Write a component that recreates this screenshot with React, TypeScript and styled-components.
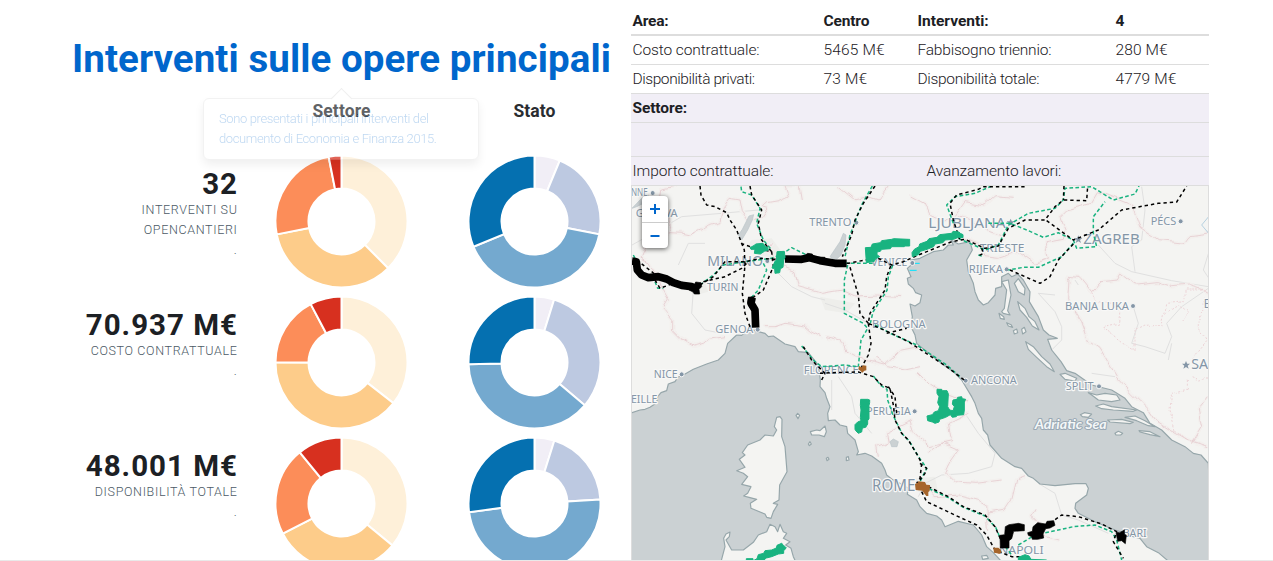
import React from "react";
import styled, { createGlobalStyle } from "styled-components";

const Global = createGlobalStyle`
  * { box-sizing: border-box; }
  body { margin: 0; background: #fff; overflow: hidden; font-family: Roboto, "Liberation Sans", sans-serif; color: #1c2024; }
`;

const Page = styled.main`
  display: flex;
  height: 561px;
  padding-left: 72px;
  overflow: hidden;
  border-bottom: 1px solid #e9e9e9;
`;

const Summary = styled.section`
  width: 559px;
  flex: none;
  position: relative;
`;

const Title = styled.h1`
  margin: 0;
  width: 559px;
  padding-top: 37px;
  height: 90px;
  line-height: 44px;
  font-size: 38.5px;
  font-weight: 700;
  letter-spacing: 0.08px;
  color: #06c;
  white-space: nowrap;
`;

const Grid = styled.div`
  display: grid;
  grid-template-columns: 173px 193px 193px;
  grid-template-rows: 61px;
  grid-auto-rows: 141px;
`;

const ColumnTitle = styled.h2`
  margin: 0;
  padding-top: 10px;
  text-align: center;
  font-size: 17.5px;
  line-height: 22px;
  font-weight: 700;
  letter-spacing: 0.1px;
  color: #2a2d31;
`;

const Stat = styled.div`
  padding: 17px 8px 0 0;
  text-align: right;
`;

const Value = styled.div`
  font-size: 29.5px;
  line-height: 32px;
  font-weight: 700;
  letter-spacing: 1px;
  margin-right: -1px;
  white-space: nowrap;
`;

const Caption = styled.div`
  font-size: 12.5px;
  line-height: 20px;
  font-weight: 300;
  letter-spacing: 0.65px;
  margin-right: -0.5px;
  color: #4c5a66;
  text-transform: uppercase;
`;

const DonutSvg = styled.svg`
  display: block;
  margin: 4px 0 0 30px;
`;

const Tooltip = styled.div`
  position: absolute;
  left: 131px;
  top: 98px;
  width: 276px;
  height: 62px;
  padding: 10px 15px;
  opacity: 0.25;
  border: 1px solid #ccc;
  border-radius: 6px;
  background: #fff;
  box-shadow: 0 5px 10px rgba(0, 0, 0, 0.25);
  font-size: 13px;
  line-height: 20px;
  font-weight: 300;
  letter-spacing: -0.38px;
  color: #06c;
  white-space: nowrap;
  &::before {
    content: "";
    position: absolute;
    left: 130px;
    top: -8px;
    width: 14px;
    height: 14px;
    border: 1px solid #bbb;
    border-right: 0;
    border-bottom: 0;
    background: #fff;
    transform: rotate(45deg);
  }
`;

const Detail = styled.section`
  width: 578px;
  flex: none;
  padding-top: 7px;
  display: flex;
  flex-direction: column;
`;

const Row = styled.div<{ $cols?: string; $h?: number; $head?: boolean; $shade?: boolean; $rule?: number }>`
  display: grid;
  grid-template-columns: ${(p) => p.$cols || "191px 94px 198px 1fr"};
  height: ${(p) => p.$h || 29}px;
  padding-left: 1.5px;
  line-height: 28px;
  font-size: 15.5px;
  font-weight: ${(p) => (p.$head ? 700 : 300)};
  background: ${(p) => (p.$shade ? "#f1eef6" : "#fff")};
  border-top: ${(p) => p.$rule ?? 1}px solid #ddd;
  white-space: nowrap;
`;

const Cell = styled.span<{ $track?: number }>`
  letter-spacing: ${(p) => p.$track ?? -0.2}px;
`;

const MapFrame = styled.div`
  position: relative;
  height: 375px;
  border: 1px solid #ddd;
  border-bottom: 0;
  overflow: hidden;
`;

const MapSvg = styled.svg`
  display: block;
`;

const Zoom = styled.div`
  position: absolute;
  left: 10px;
  top: 10px;
  width: 26px;
  border-radius: 4px;
  background: #fff;
  box-shadow: 0 1px 5px rgba(0, 0, 0, 0.65);
`;

const ZoomButton = styled.button`
  display: flex;
  align-items: center;
  justify-content: center;
  width: 26px;
  height: 26px;
  padding: 0;
  border: 0;
  background: none;
  color: #06c;
  & + & { border-top: 1px solid #ccc; }
`;

const point = (r: number, deg: number) => {
  const a = (deg * Math.PI) / 180;
  return `${(66 + r * Math.sin(a)).toFixed(2)} ${(66 - r * Math.cos(a)).toFixed(2)}`;
};

const slice = (from: number, to: number) => {
  const large = to - from > 180 ? 1 : 0;
  return `M${point(66, from)}A66 66 0 ${large} 1 ${point(66, to)}L${point(33, to)}A33 33 0 ${large} 0 ${point(33, from)}Z`;
};

const SECTOR = ["#fef0d9", "#fdcc8a", "#fc8d59", "#d7301f"];
const STATE = ["#f1eef6", "#bdc9e1", "#74a9cf", "#0570b0"];

function Donut({ stops, colors }: { stops: number[]; colors: string[] }) {
  const edges = [0, ...stops, 360];
  return (
    <DonutSvg width="133" height="133" viewBox="-0.5 -0.5 133 133">
      {colors.map((c, i) => (
        <path key={c} d={slice(edges[i], edges[i + 1])} fill={c} stroke="#fff" strokeWidth="2" />
      ))}
    </DonutSvg>
  );
}

const STATS = [
  { value: "32", caption: ["Interventi su", "opencantieri", "."], sector: [135, 258.75, 348.75], state: [22.5, 101.25, 247.5] },
  { value: "70.937 M€", caption: ["Costo contrattuale", "."], sector: [128.1, 270.2, 332.2], state: [17.3, 130.4, 268.4] },
  { value: "48.001 M€", caption: ["Disponibilità totale", "."], sector: [129.5, 242.9, 320.8], state: [17.5, 86.5, 262.4] },
];

/* Map drawing: three units to a pixel. */
const WEST_SEA =
  "M21 698L45 690 60 688 75 682 95 668 98 650 108 638 125 632 130 612 150 605 158 592 175 585 205 568 245 552 280 540 300 520 308 490 335 465 350 466 365 452 388 450 400 455 420 460 430 470 445 468 480 492 510 500 520 515 550 518 580 555 586 600 585 620 600 638 605 655 615 680 608 700 610 722 630 720 645 735 665 740 668 760 690 780 700 815 695 825 720 820 740 828 770 850 780 870 785 885 800 897 830 913 850 925 847 943 875 960 885 980 905 1000 935 1008 950 1020 960 1040 1000 1024 1045 1035 1070 1065 1085 1100 1105 1118 1130 1145 0 1145 0 698Z";
const ADRIATIC =
  "M847 265L862 252 858 240 885 235 925 215 955 210 970 195 985 195 978 180 1000 192 1020 188 1035 185 1042 210 1025 240 1030 275 1045 310 1050 335 1060 360 1075 375 1090 368 1110 345 1112 325 1130 320 1130 290 1150 280 1160 290 1178 282 1195 300 1215 335 1213 365 1240 410 1255 450 1272 465 1297 475 1268 478 1280 510 1308 545 1325 572 1350 580 1400 615 1460 630 1500 655 1520 680 1555 698 1575 730 1610 750 1640 780 1680 800 1705 820 1728 825 1750 850 1760 1145 1632 1145 1600 1118 1565 1100 1545 1075 1525 1070 1500 1060 1470 1050 1410 1025 1360 1000 1350 985 1352 970 1385 945 1390 925 1383 911 1350 911 1290 917 1245 912 1225 895 1210 888 1190 865 1170 860 1130 835 1095 795 1088 765 1075 750 1070 715 1060 700 1050 670 1040 650 1010 600 985 575 965 562 905 515 875 490 870 465 858 440 862 410 855 372 870 378 885 368 890 345 872 338 865 325 850 312 847 295 858 290Z";

const ISLANDS = [
  "M455 712L465 710 471 718 470 770 480 800 486 875 464 915 462 960 445 970 458 973 445 995 438 1015 425 1012 420 1002 378 985 376 970 395 958 372 952 356 948 368 940 378 920 350 913 368 890 355 880 335 872 360 862 343 838 360 825 352 818 368 795 405 780 420 765 445 768 455 750 448 740Z",
  "M288 1145L300 1100 296 1075 303 1062 315 1056 313 1070 303 1080 320 1110 355 1110 385 1087 400 1065 425 1055 435 1033 450 1040 458 1055 465 1033 475 1055 485 1060 475 1075 495 1085 482 1095 498 1105 505 1130 512 1145Z",
  "M556 755L575 750 585 752 600 738 604 755 598 770 582 765 560 765Z",
  "M513 706L518 700 524 706 519 716Z",
  "M550 792L555 785 559 792 553 797Z",
  "M604 835L609 832 612 838 606 842Z",
  "M664 832L670 830 672 840 664 842Z",
  "M1130 395L1138 385 1145 330 1130 305 1150 300 1158 345 1148 392 1155 405 1135 400Z",
  "M1122 400L1136 410 1138 418 1126 415Z",
  "M1145 428L1158 434 1163 442 1150 438Z",
  "M1168 310L1180 296 1200 325 1198 345 1180 335Z",
  "M1178 365L1200 385 1212 410 1230 425 1242 450 1222 438 1205 412 1185 390Z",
  "M1202 485L1225 500 1250 530 1275 552 1288 575 1265 560 1235 532 1210 508Z",
  "M1190 448L1198 442 1203 455 1193 462Z",
  "M1165 452L1175 447 1178 458 1168 462Z",
  "M1305 583L1320 580 1355 595 1350 603 1320 598Z",
  "M1415 645L1440 640 1475 645 1485 660 1460 665 1420 660 1400 645 1390 638Z",
  "M1412 678L1435 672 1460 680 1535 690 1525 694 1465 690 1430 686Z",
  "M1366 704L1378 698 1400 702 1390 712 1372 710Z",
  "M1448 720L1490 718 1525 727 1515 731 1455 726Z",
  "M1500 712L1530 708 1560 722 1590 740 1570 737 1535 722Z",
  "M1542 752L1575 755 1605 770 1575 764 1545 756Z",
  "M1470 760L1480 754 1493 760 1487 765 1473 765Z",
  "M1070 1128L1085 1126 1090 1135 1073 1138Z",
];

const BORDERS =
  "M155 18L110 28 105 60 115 90 140 110 130 158 170 160 195 165 230 150 250 135 285 125 295 80 315 55 345 60 352 95 370 120 410 115 430 85 412 80 425 68 460 62 490 48 480 20 525 20 532 60 M130 160L112 180 65 190 45 235 75 245 100 290 110 325 130 360 115 385 140 415 140 450 165 475 205 498 235 490 250 478 300 470 M440 190L425 215 455 230 475 262 510 275 520 320 590 340 650 330 690 348 760 345 830 350 M415 440L450 440 480 430 540 438 560 455 590 470 M600 470L650 480 665 510 720 540 780 555 830 510 880 500 M640 20L690 60 730 50 760 60 790 20 M860 48L900 70 915 105 960 120 1000 110 1050 130 1085 150 1130 165 M985 115L1020 65 1080 75 1110 50 1160 55 M1015 170L1060 185 1080 230 1120 235 1180 215 1230 250 1270 235 1260 185 1315 175 1320 150 1305 110 1325 90 1400 70 1420 35 1520 75 1545 145 1600 182 1680 190 1695 170 1755 162 M1330 300L1335 290 1365 292 1400 335 1425 305 1480 300 1490 282 1530 312 1600 305 1640 320 1690 315 1755 335 M1332 300L1328 360 1370 425 1390 480 1425 505 1475 590 1520 640 1570 690 1590 720 1630 745 1690 780 1750 800 M1750 650L1720 690 1730 740 1700 790 M760 830L755 800 790 785 785 760 855 725 865 755 880 770 915 800 980 785 970 730 1030 700 M750 530L790 560 840 570 885 560 M905 820L955 790 1000 810 975 845 960 875 990 905 1050 910 1130 900 M880 580L910 610 940 630 990 650 1030 660 M905 920L930 950 1000 945 1060 960 1085 975 1090 1050 M1085 1000L1140 990 1160 960 1175 900 1200 890 M1230 985L1220 1005 1245 1030 1260 1070 1300 1080";
const DOTTED_BORDERS =
  "M1400 340L1410 360 1460 370 1485 390 1480 430 1430 440 1490 485 1530 510 1530 450 1560 435 1610 440 1625 370 1680 365 1680 330 1740 330 M1620 400L1660 375 1690 400 1670 420 M1740 350L1720 440 1745 485 1700 540 M1690 600L1690 630 1640 640 1635 690 1650 750 1700 790 M1700 590L1720 600 1745 595";
const ROADS =
  "M21 195L110 145 170 110 290 100 400 90 M160 255L190 190 240 190 M205 330L200 400 240 450 290 460 M440 260L500 320 560 350 600 360 M600 370L660 390 730 430 M1420 195L1470 250 1520 275 1640 302 1750 320 M1530 275L1520 200 1550 180 1560 90 1550 20 M1240 340L1290 395 1310 440 1310 480 1280 510 M1350 300L1360 315 M1525 380L1540 430 1520 490 1560 500 1620 520 1640 470 1625 430 1670 380 1750 325 M1640 490L1630 540 M1755 205L1735 270 1755 300 M1240 910L1290 940 1310 1005 1360 1020 1450 1060 M1400 580L1470 590 M1020 700L1060 760 1110 820 1100 860 1030 880 950 885 900 910 880 950 M640 590L680 650 690 700 740 760 M620 600L620 690 M870 1000L940 1040 1030 1050 M1290 345L1240 340";

const RAIL_BLACK =
  "M225 18L228 45 245 75 270 80 305 98 315 120 335 150 348 185 358 210 360 255 352 340 360 400 375 440 M375 18L380 45 410 90 400 130 410 180 440 215 M35 240L80 275 110 300 M90 300L105 325 145 310 M225 315L265 290 300 245 360 245 410 235 480 240 M235 305L300 290 350 265 370 245 M348 190L390 205 440 215 445 260 415 330 380 355 M440 240L480 235 M590 248L670 250 720 240 760 235 800 255 835 245 880 225 980 185 1020 178 1080 205 1120 198 1150 145 1200 120 1260 120 1290 80 1315 60 1385 62 1388 18 M750 18L715 70 690 120 680 165 652 230 M675 262L700 345 705 400 730 430 M797 258L785 290 780 330 735 400 730 430 800 460 850 485 965 560 1020 602 M730 430L738 490 730 525 705 570 M785 460L845 445 M1004 178L985 120 975 70 995 45 1060 28 1075 20 1200 20 M1317 18L1315 60 M1265 122L1345 180 1370 170 1420 150 1490 90 1600 70 1655 66 1685 18 M1345 192L1300 240 1275 290 1245 310 1200 290 1155 270 M1070 205L1075 220 1060 228 M535 500L560 540 600 580 M585 580L620 578 700 576 745 590 770 615 795 625 805 675 810 720 830 760 850 780 880 830 890 850 885 895 875 910 M790 620L810 650 815 700 M885 850L905 865 900 880 885 900 M590 600L600 580 M910 920L970 950 1015 980 1080 1005 1110 1040 1130 1085 M890 935L905 965 1000 1010 1055 1035 1085 1065 1110 1110 1160 1130 1200 1130 M1275 1030L1310 1005 1360 1010 1430 1032 1475 1055 1465 1085 1495 1135";
const RAIL_GREEN =
  "M348 20L350 35 380 45 405 85 395 130 415 180 440 210 M25 225L35 245 M90 305L98 325 115 325 M225 315L265 285 295 255 340 248 400 240 440 235 475 220 500 203 545 225 M415 250L425 270 400 330 380 352 M742 18L710 75 700 100 675 165 660 230 M660 250L750 250 M668 255L658 300 658 400 715 430 728 445 708 480 700 560 M803 256L790 291 786 331 744 396 736 430 M750 435L800 462 875 495 965 555 1005 590 M985 130L965 75 990 50 1050 40 1100 18 M1000 175L1080 210 1120 195 1150 135 1210 100 1290 85 1315 60 1320 25 1400 20 1465 60 1530 42 1542 18 M1090 130L1155 130 1210 152 1255 172 1300 158 1345 180 1355 205 1415 200 1405 160 1405 110 1440 65 M1345 190L1310 230 1240 262 1195 262 1150 270 M530 498L570 545 590 560 660 555 700 560 M745 588L768 617 786 628 788 660 804 705 812 722 832 762 852 782 882 832 905 865 885 905 M912 926L970 953 1015 982 1080 1008 1112 1042 1128 1080 M1130 1085L1160 1125 M1180 1095L1230 1065 1345 1040 1410 1035 1460 1055 1475 1080 1490 1140 M1060 225L1075 230";

interface City { x: number; y: number; name: string; w: number; size?: number; dot?: [number, number]; star?: [number, number] }
const CITIES: City[] = [
  { x: 18, y: 49, name: "NNE", w: 50, dot: [83, 39] },
  { x: 32, y: 110, name: "GENÈVA", w: 126 },
  { x: 247, y: 258, name: "MILANO", w: 167, size: 44, dot: [427, 243] },
  { x: 246, y: 332, name: "TURIN", w: 94 },
  { x: 271, y: 459, name: "GENOA", w: 114, dot: [398, 449] },
  { x: 553, y: 138, name: "TRENTO", w: 126, dot: [694, 128] },
  { x: 739, y: 259, name: "VENICE", w: 108, dot: [862, 249] },
  { x: 910, y: 144, name: "LJUBLJANA", w: 232, size: 44, star: [1157, 128] },
  { x: 1064, y: 217, name: "TRIESTE", w: 134 },
  { x: 1031, y: 279, name: "RIJEKA", w: 103, dot: [1145, 268] },
  { x: 1375, y: 191, name: "ZAGREB", w: 169, size: 44, star: [1360, 178] },
  { x: 1577, y: 135, name: "PÉCS", w: 77, dot: [1667, 124] },
  { x: 1320, y: 389, name: "BANJA LUKA", w: 192, dot: [1524, 378] },
  { x: 1736, y: 384, name: "B", w: 22, size: 40 },
  { x: 1699, y: 566, name: "SARAJEVO", w: 200, size: 42, star: [1683, 555] },
  { x: 741, y: 443, name: "BOLOGNA", w: 161 },
  { x: 536, y: 582, name: "FLORENCE", w: 165 },
  { x: 86, y: 594, name: "NICE", w: 72, dot: [170, 583] },
  { x: 18, y: 669, name: "EILLE", w: 79 },
  { x: 724, y: 704, name: "PERUGIA", w: 133, dot: [869, 694] },
  { x: 1038, y: 612, name: "ANCONA", w: 137, dot: [1022, 602] },
  { x: 741, y: 934, name: "ROME", w: 130, size: 46 },
  { x: 1322, y: 629, name: "SPLIT", w: 84, dot: [1422, 619] },
  { x: 1493, y: 1071, name: "BARI", w: 72 },
  { x: 1122, y: 1122, name: "NAPOLI", w: 134 },
];

const Label = styled.text<{ $sea?: boolean }>`
  font-family: ${(p) => (p.$sea ? "Lato" : '"Noto Sans"')}, sans-serif;
  font-style: ${(p) => (p.$sea ? "italic" : "normal")};
  font-weight: ${(p) => (p.$sea ? 700 : 400)};
  fill: ${(p) => (p.$sea ? "#f4f7f8" : "#8496a7")};
  stroke: ${(p) => (p.$sea ? "#9aa9b5" : "#f8f8f7")};
  stroke-width: ${(p) => (p.$sea ? 6 : 7)}px;
  stroke-linejoin: round;
  paint-order: stroke;
`;

const STAR = "M0-12L3.500-4 12-4 5 2 8 11 0 6-8 11-5 2-12-4-3.500-4Z";

function ItalyMap() {
  return (
    <MapSvg width="576" height="374" viewBox="21 18 1728 1122" fill="none">
      <defs>
        <filter id="meander" x="0" y="0" width="1800" height="1200" filterUnits="userSpaceOnUse">
          <feTurbulence type="fractalNoise" baseFrequency="0.03" numOctaves="1" seed="4" />
          <feDisplacementMap in="SourceGraphic" scale="24" xChannelSelector="R" yChannelSelector="G" />
        </filter>
      </defs>
      <rect x="21" y="18" width="1728" height="1122" fill="#f4f4f2" />
      <path
        fill="#eeeeeb"
        d="M380 180L440 175 470 215 450 235 400 225 365 200ZM205 320L240 310 250 335 215 345ZM870 895L930 890 940 940 880 935ZM585 350L690 370 665 400 600 390Z"
      />
      <path d={ROADS} stroke="#e0e0e0" strokeWidth="3" strokeLinejoin="round" />
      <g filter="url(#meander)" strokeLinejoin="round">
        <path d={BORDERS} stroke="#f3f0ee" strokeWidth="12" />
        <path d={BORDERS} stroke="#e6cdd0" strokeWidth="2.5" />
        <path d={DOTTED_BORDERS} stroke="#ebced2" strokeWidth="2.6" strokeDasharray="6 5" />
      </g>
      <g fill="#cbd1d3" stroke="#96a6aa" strokeWidth="3.500" strokeLinejoin="round">
        <path d={WEST_SEA} />
        <path d={ADRIATIC} />
      </g>
      <g fill="#cbd1d3" stroke="#bac4c8" strokeWidth="2">
        <path d="M340 165L352 148 372 108 386 104 382 120 368 150 350 180Z" />
        <path d="M615 230L645 185 655 160 663 165 660 195 648 225 630 242Z" />
        <path d="M795 785L805 777 820 785 816 800 800 800Z" />
        <path d="M21 85L50 55 70 45 65 65 35 80Z" />
      </g>
      <path d="M1755 105L1730 135 1755 165" stroke="#b5d0e0" strokeWidth="3" />
      <g fill="#f4f4f2" stroke="#96a6aa" strokeWidth="3.500" strokeLinejoin="round">
        {ISLANDS.map((d) => <path key={d} d={d} />)}
      </g>
      {CITIES.map((c) => (
        <g key={c.name}>
          <Label x={c.x} y={c.y} fontSize={c.size || 32} textLength={c.w} lengthAdjust="spacingAndGlyphs">{c.name}</Label>
          {c.dot && <circle cx={c.dot[0]} cy={c.dot[1]} r="7.500" fill="#8496a7" stroke="#f8f8f7" strokeWidth="3" />}
          {c.star && <path d={STAR} transform={`translate(${c.star[0]} ${c.star[1]})`} fill="#8496a7" />}
        </g>
      ))}
      <Label $sea x="1229" y="747" fontSize="38" textLength="216" lengthAdjust="spacingAndGlyphs">Adriatic Sea</Label>
      <path d={RAIL_GREEN} stroke="#19b380" strokeWidth="4.500" strokeDasharray="11 7" strokeLinejoin="round" />
      <path d={RAIL_BLACK} stroke="#000" strokeWidth="4.500" strokeDasharray="10 9" strokeLinejoin="round" />
      <g stroke="#000" strokeWidth="23" strokeLinejoin="round">
        <path d="M21 243L34 245 37 270 50 285 70 293 100 290 125 297 145 308 170 316 200 320 215 325" />
        <path d="M381 352L378 370 390 390 392 443" />
        <path d="M480 237L530 238 552 233 585 242 630 250 665 250" />
      </g>
      <path
        d="M190 318L208 316 212 306 228 308 230 320 222 328 224 342 208 342 204 336 192 330ZM370 352L382 350 390 356 388 370 374 382 368 368ZM540 226L548 220 562 222 564 230 600 232 600 242 540 240Z
           M1125 1066L1139 1064 1141 1040 1152 1034 1180 1030 1198 1034 1198 1052 1166 1054 1160 1076 1152 1082 1152 1104 1126 1104Z
           M1208 1058L1222 1054 1224 1040 1238 1028 1262 1032 1266 1024 1286 1022 1290 1036 1275 1044 1262 1046 1254 1062 1256 1074 1238 1078 1222 1078 1220 1070 1210 1066Z
           M1473 1057L1484 1058 1498 1050 1498 1062 1504 1066 1501 1091 1490 1082 1478 1084Z"
        fill="#000"
        stroke="#000"
        strokeWidth="2"
      />
      <g fill="#19b380" stroke="#19b380" strokeWidth="3" strokeLinejoin="round">
        <path d="M375 203L388 196 392 192 414 190 422 200 428 202 430 210 418 214 406 222 388 220 390 208 378 208Z" />
        <path d="M456 215L478 214 480 232 476 240 474 262 466 266 464 278 450 280 449 266 441 264 450 244 454 240Z" />
        <path d="M721 203L738 202 742 192 766 188 770 182 800 178 806 176 850 178 854 178 854 198 838 198 838 200 800 200 796 206 770 208 766 214 756 216 756 224 764 230 752 236 748 244 724 248Z" />
        <path d="M861 218L868 208 882 200 884 192 906 184 912 176 936 172 944 164 980 160 984 154 1002 156 1006 160 1014 164 1014 173 1000 172 986 178 960 180 954 188 930 192 926 200 906 208 886 214 880 224 862 230Z" />
        <path d="M707 658L728 658 734 660 734 668 732 676 732 716 728 722 728 732 722 742 712 744 710 756 700 760 692 752 690 748 690 734 698 726 708 722 706 712 708 690 706 676Z" />
        <path d="M936 628L950 628 952 632 966 632 970 642 968 680 974 690 984 692 988 680 982 672 984 660 996 658 998 652 1010 650 1012 656 1022 658 1018 666 1018 690 1016 704 996 706 994 710 982 712 976 704 962 712 944 718 942 726 930 730 922 726 908 722 906 708 922 704 928 696 940 692 944 680 938 668 942 650 936 640Z" />
        <path d="M380 1145L396 1136 400 1124 416 1120 420 1112 440 1110 454 1104 456 1096 470 1090 474 1094 484 1104 476 1112 476 1120 460 1122 440 1130 424 1134 410 1145ZM364 1136H384V1145H364ZM1180 1132L1200 1124 1212 1128 1218 1138 1265 1140V1145H1180Z" />
      </g>
      <path d="M870 912L878 908 880 904 900 906 904 914 915 915 914 933 910 936 910 948 904 948 896 938 892 932 872 930ZM702 558L710 562 714 556 724 557 724 571 718 572 712 578 706 572 700 568ZM1105 1103L1120 1103 1126 1108 1130 1116 1123 1122 1116 1120 1107 1118Z" fill="#a6652b" />
      <path d="M854 271H875M870 250H884" stroke="#00e5ff" strokeWidth="3" />
    </MapSvg>
  );
}

export default function App() {
  return (
    <>
      <Global />
      <Page>
        <Summary>
          <Title>Interventi sulle opere principali</Title>
          <Grid>
            <span />
            <ColumnTitle>Settore</ColumnTitle>
            <ColumnTitle>Stato</ColumnTitle>
            {STATS.map((s) => (
              <React.Fragment key={s.value}>
                <Stat>
                  <Value>{s.value}</Value>
                  {s.caption.map((line) => <Caption key={line}>{line}</Caption>)}
                </Stat>
                <Donut stops={s.sector} colors={SECTOR} />
                <Donut stops={s.state} colors={STATE} />
              </React.Fragment>
            ))}
          </Grid>
          <Tooltip>
            Sono presentati i principali interventi del<br />
            documento di Economia e Finanza 2015.
          </Tooltip>
        </Summary>
        <Detail>
          <Row $head $rule={0} $h={27}><Cell>Area:</Cell><Cell $track={-0.15}>Centro</Cell><Cell $track={0}>Interventi:</Cell><Cell>4</Cell></Row>
          <Row $rule={2} $h={30}><Cell $track={-0.1}>Costo contrattuale:</Cell><Cell $track={0.15}>5465 M€</Cell><Cell $track={-0.2}>Fabbisogno triennio:</Cell><Cell $track={0.1}>280 M€</Cell></Row>
          <Row><Cell $track={-0.43}>Disponibilità privati:</Cell><Cell $track={0.15}>73 M€</Cell><Cell $track={-0.32}>Disponibilità totale:</Cell><Cell $track={0.1}>4779 M€</Cell></Row>
          <Row $shade $head><Cell $track={-0.1}>Settore:</Cell></Row>
          <Row $shade $h={34} />
          <Row $shade $cols="294px 1fr"><Cell $track={-0.1}>Importo contrattuale:</Cell><Cell $track={-0.1}>Avanzamento lavori:</Cell></Row>
          <MapFrame>
            <ItalyMap />
            <Zoom>
              <ZoomButton aria-label="Zoom in">
                <svg width="12" height="12" viewBox="0 0 12 12"><path d="M6 1V11M1 6H11" stroke="currentColor" strokeWidth="2" /></svg>
              </ZoomButton>
              <ZoomButton aria-label="Zoom out">
                <svg width="12" height="12" viewBox="0 0 12 12"><path d="M1.500 6H10.500" stroke="currentColor" strokeWidth="2" /></svg>
              </ZoomButton>
            </Zoom>
          </MapFrame>
        </Detail>
      </Page>
    </>
  );
}
